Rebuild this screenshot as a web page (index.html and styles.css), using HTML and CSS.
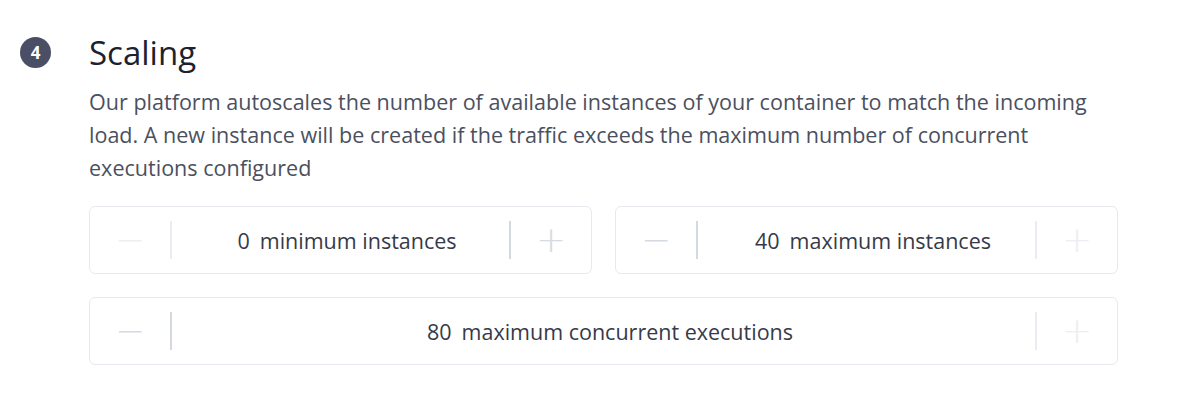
FILE: index.html
```html
<!DOCTYPE html>
<html lang="en">
<head>
<meta charset="utf-8">
<title>Scaling</title>
<link rel="stylesheet" href="styles.css">
</head>
<body>
<section class="step">
  <div class="badge">4</div>
  <div class="content">
    <h2 class="title">Scaling</h2>
    <p class="desc">Our platform autoscales the number of available instances of your container to match the incoming load. A new instance will be created if the traffic exceeds the maximum number of concurrent executions configured</p>
    <div class="grid">
      <div class="stepper">
        <button class="btn btn-off" type="button">&minus;</button>
        <span class="sep sep-light"></span>
        <div class="value"><span class="num">0</span><span class="label">minimum instances</span></div>
        <span class="sep sep-dark"></span>
        <button class="btn btn-on" type="button">+</button>
      </div>
      <div class="stepper">
        <button class="btn btn-on" type="button">&minus;</button>
        <span class="sep sep-dark"></span>
        <div class="value"><span class="num">40</span><span class="label">maximum instances</span></div>
        <span class="sep sep-light"></span>
        <button class="btn btn-off" type="button">+</button>
      </div>
      <div class="stepper wide">
        <button class="btn btn-on" type="button">&minus;</button>
        <span class="sep sep-dark"></span>
        <div class="value"><span class="num">80</span><span class="label">maximum concurrent executions</span></div>
        <span class="sep sep-light"></span>
        <button class="btn btn-off" type="button">+</button>
      </div>
    </div>
  </div>
</section>
</body>
</html>
```

FILE: styles.css
```css
html, body {
  margin: 0;
  padding: 0;
  background: #ffffff;
}

body {
  font-family: "Open Sans", "Noto Sans", sans-serif;
  color: #1f2433;
}

.step {
  display: flex;
  align-items: flex-start;
  padding-left: 20px;
}

.badge {
  flex: none;
  width: 31px;
  height: 31px;
  margin-top: 37px;
  border-radius: 50%;
  background: #4a4f66;
  color: #ffffff;
  font-size: 17px;
  font-weight: 700;
  line-height: 31px;
  text-align: center;
}

.content {
  width: 1029px;
  margin-left: 38px;
  padding-top: 33px;
}

.title {
  margin: 0;
  font-size: 33px;
  font-weight: 400;
  line-height: 40px;
  color: #1c2130;
}

.desc {
  margin: 12px 0 0;
  font-size: 21.55px;
  line-height: 33px;
  color: #4b5060;
}

.grid {
  display: grid;
  grid-template-columns: 1fr 1fr;
  gap: 23px;
  margin-top: 22px;
}

.stepper {
  display: flex;
  align-items: center;
  height: 68px;
  box-sizing: border-box;
  border: 1px solid #e7e9ee;
  border-radius: 6px;
}

.wide {
  grid-column: 1 / span 2;
}

.btn {
  flex: none;
  width: 80px;
  height: 100%;
  padding: 0;
  border: 0;
  background: transparent;
  font-family: "DejaVu Sans", sans-serif;
  font-size: 36px;
  font-weight: 200;
  line-height: 1;
  text-align: center;
}

.btn-off {
  color: #eceef2;
}

.btn-on {
  color: #d6dae2;
}

.sep {
  flex: none;
  width: 2px;
  height: 38px;
}

.sep-light {
  background: #e9ecf1;
}

.sep-dark {
  background: #d3d8e1;
}

.value {
  flex: 1;
  display: flex;
  justify-content: center;
  gap: 10px;
  padding-left: 13px;
  font-size: 21.5px;
  color: #363a48;
}
```
